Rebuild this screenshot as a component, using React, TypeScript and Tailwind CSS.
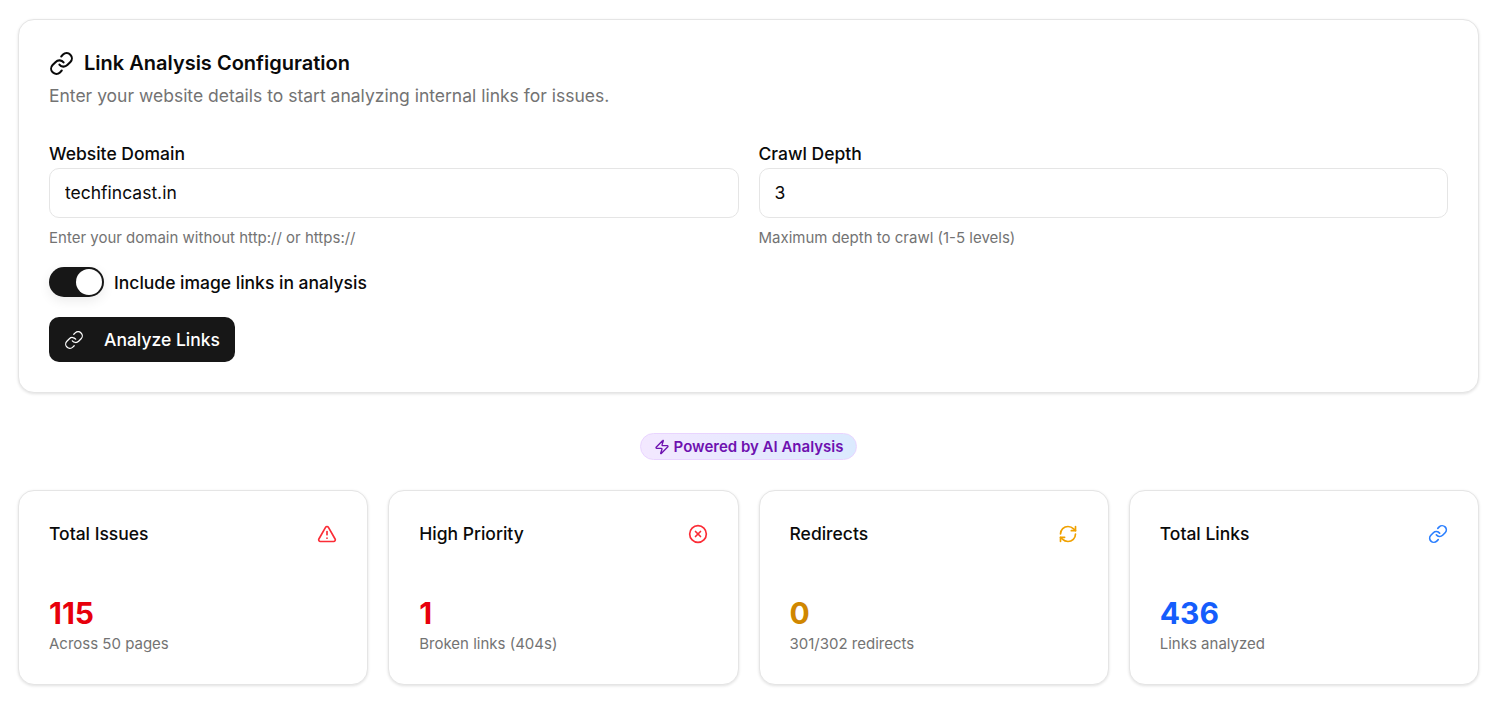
import { AlertTriangle, RefreshCw, XCircle, Zap } from 'lucide-react';
import type { ReactNode } from 'react';

interface Stat {
  title: string;
  value: string;
  note: string;
  icon: ReactNode;
  valueClass: string;
}

function LinkGlyph({ className }: { className: string }) {
  return (
    <svg
      viewBox="0 0 24 24"
      fill="none"
      stroke="currentColor"
      strokeWidth="2"
      strokeLinecap="round"
      strokeLinejoin="round"
      className={className}
    >
      <path d="M10 13a5 5 0 0 0 7.54.54l3-3a5 5 0 0 0-7.07-7.07l-1.72 1.71" />
      <path d="M14 11a5 5 0 0 0-7.54-.54l-3 3a5 5 0 0 0 7.07 7.07l1.71-1.71" />
    </svg>
  );
}

const stats: Stat[] = [
  {
    title: 'Total Issues',
    value: '115',
    note: 'Across 50 pages',
    icon: <AlertTriangle className="w-5 h-5 text-[#fb2c36]" />,
    valueClass: 'text-[#e7000b]',
  },
  {
    title: 'High Priority',
    value: '1',
    note: 'Broken links (404s)',
    icon: <XCircle className="w-5 h-5 text-[#fb2c36]" />,
    valueClass: 'text-[#e7000b]',
  },
  {
    title: 'Redirects',
    value: '0',
    note: '301/302 redirects',
    icon: <RefreshCw className="w-5 h-5 text-[#f0a100]" />,
    valueClass: 'text-[#d08700]',
  },
  {
    title: 'Total Links',
    value: '436',
    note: 'Links analyzed',
    icon: <LinkGlyph className="w-5 h-5 text-[#2b7fff]" />,
    valueClass: 'text-[#155dfc]',
  },
];

function Field({ label, value, help }: { label: string; value: string; help: string }) {
  return (
    <div className="flex flex-col">
      <label className="text-[17.5px] font-medium leading-[20px] text-[#0a0a0a]">{label}</label>
      <input
        readOnly
        value={value}
        className="mt-[4px] h-[50px] w-full rounded-[10px] border border-[#e5e5e5] bg-white px-[15px] pb-[2px] text-[17.5px] text-[#0a0a0a] outline-none"
      />
      <p className="mt-[11px] text-[15px] leading-[18px] text-[#737373]">{help}</p>
    </div>
  );
}

export default function App() {
  return (
    <div className="min-h-screen bg-white pl-[18px] pr-[21px] pt-[19px] font-['Inter',sans-serif] text-[#0a0a0a]">
      <section className="h-[374px] rounded-[16px] border border-[#e5e5e5] bg-white px-[30px] pt-[30px] shadow-[0_1px_3px_rgba(0,0,0,0.12)]">
        <div className="flex items-center gap-[10px]">
          <LinkGlyph className="w-[25px] h-[25px] text-[#0a0a0a]" />
          <h2 className="text-xl font-semibold leading-[26px]">Link Analysis Configuration</h2>
        </div>
        <p className="mt-[10px] text-[17.5px] leading-[20px] text-[#737373]">
          Enter your website details to start analyzing internal links for issues.
        </p>

        <div className="mt-[38px] grid grid-cols-2 gap-5">
          <Field
            label="Website Domain"
            value="techfincast.in"
            help="Enter your domain without http:// or https://"
          />
          <Field label="Crawl Depth" value="3" help="Maximum depth to crawl (1-5 levels)" />
        </div>

        <div className="mt-[20px] flex items-center gap-[10px]">
          <div className="flex h-[30px] w-[55px] items-center justify-end rounded-full bg-[#171717] pr-[2px] shadow-[0_4px_12px_rgba(0,0,0,0.08)]">
            <div className="h-[26px] w-[26px] rounded-full bg-white" />
          </div>
          <span className="pt-[2px] text-[17.5px] font-medium">Include image links in analysis</span>
        </div>

        <button className="mt-[20px] flex h-[45px] w-[186px] items-center rounded-[10px] bg-[#171717] pl-[15px] text-[17.5px] font-medium text-white">
          <LinkGlyph className="w-5 h-5 stroke-[1.5]" />
          <span className="ml-[20px] pt-[2px]">Analyze Links</span>
        </button>
      </section>

      <div className="mt-[40px] flex justify-center">
        <div className="flex h-[27px] items-center gap-[4px] rounded-full border border-[#e9d4ff] bg-gradient-to-r from-[#f3e8ff] to-[#dbeafe] pl-[13px] pr-[13px] text-[15px] font-semibold text-[#6e11b0]">
          <Zap className="w-4 h-4" />
          <span className="pt-[2px]">Powered by AI Analysis</span>
        </div>
      </div>

      <div className="mt-[30px] grid grid-cols-4 gap-5">
        {stats.map((s) => (
          <div
            key={s.title}
            className="h-[195px] rounded-[16px] border border-[#e5e5e5] bg-white px-[30px] pt-[30px] shadow-[0_1px_3px_rgba(0,0,0,0.12)]"
          >
            <div className="flex items-center justify-between">
              <h3 className="text-[17.5px] font-medium leading-[26px]">{s.title}</h3>
              {s.icon}
            </div>
            <div className={`mt-[48px] text-[30px] font-bold leading-[36px] ${s.valueClass}`}>{s.value}</div>
            <p className="mt-[3px] text-[15px] leading-[20px] text-[#737373]">{s.note}</p>
          </div>
        ))}
      </div>
    </div>
  );
}
